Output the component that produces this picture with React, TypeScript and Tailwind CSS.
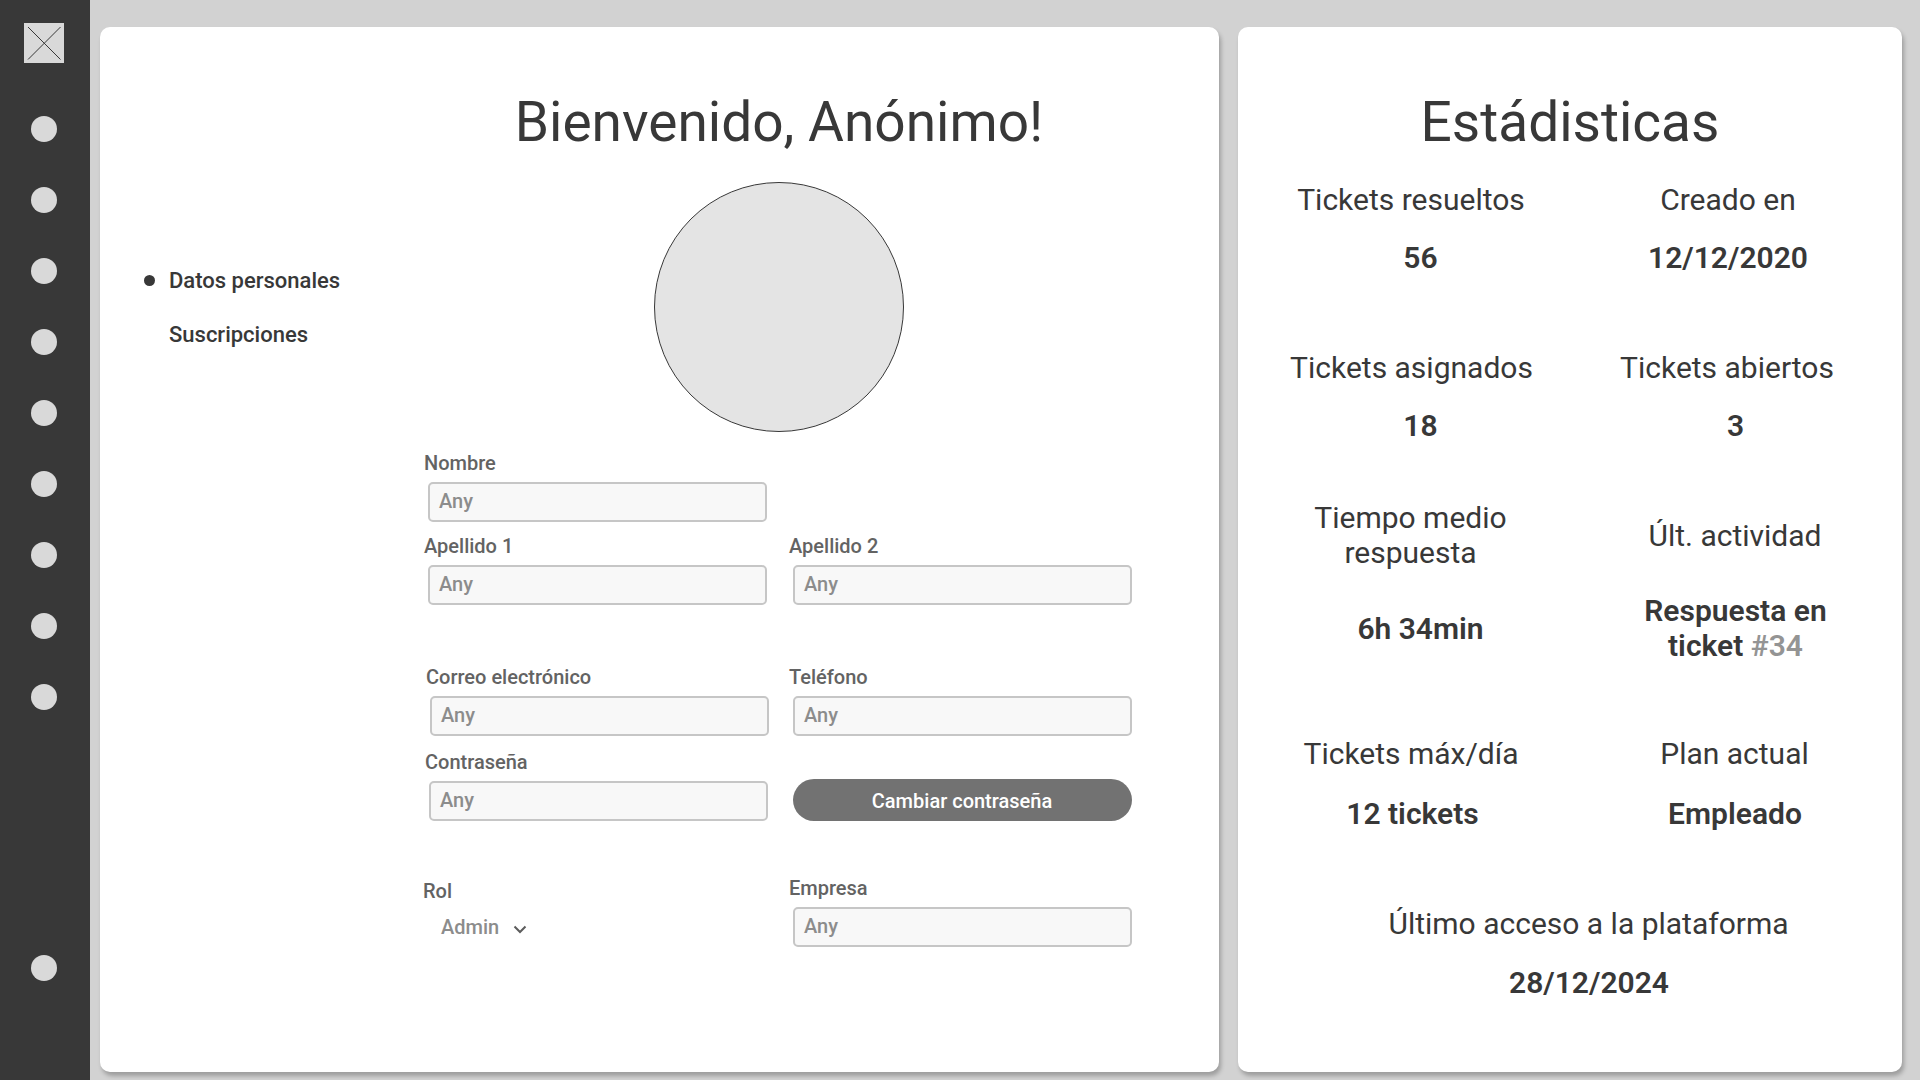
import React from "react";

const menuDots = [0, 1, 2, 3, 4, 5, 6, 7, 8];

function Field({ label, className = "" }: { label: string; className?: string }) {
  return (
    <div className={className}>
      <div className="h-[31px] text-[20px] leading-6 text-[#636363]">{label}</div>
      <div className="ml-1 h-10 w-[339px] rounded-[5px] border-2 border-[#c6c6c6] bg-[#f8f8f8] pt-[5px] pl-[9px] text-[20px] leading-6 text-[#8c8c8c]">
        Any
      </div>
    </div>
  );
}

function Stat({
  label,
  value,
  className = "",
  labelClass = "",
  valueClass = "",
}: {
  label: React.ReactNode;
  value: React.ReactNode;
  className?: string;
  labelClass?: string;
  valueClass?: string;
}) {
  return (
    <div className={`flex flex-col text-center text-[30px] leading-[35px] ${className}`}>
      <div className={labelClass}>{label}</div>
      <div className={`font-semibold ${valueClass}`}>{value}</div>
    </div>
  );
}

export default function App() {
  return (
    <div className="flex h-[1080px] w-[1920px] overflow-hidden bg-[#d2d2d2] font-['Roboto',sans-serif] text-[#383838]">
      <aside className="flex w-[90px] flex-col bg-[#383838] pt-[23px] pb-[99px] pl-6">
        <div className="flex h-10 w-10 items-center justify-center bg-[#d9d9d9]">
          <svg width="40" height="40" viewBox="0 0 40 40" fill="none" stroke="#383838" strokeWidth="1">
            <path d="M4 4L36.5 36.5M36.5 4L4 36.5" />
          </svg>
        </div>
        <div className="mt-[53px] ml-[7px] flex flex-col gap-[45px]">
          {menuDots.map((dot) => (
            <span key={dot} className="h-[26px] w-[26px] rounded-full bg-[#d9d9d9]" />
          ))}
        </div>
        <span className="mt-auto ml-[7px] h-[26px] w-[26px] rounded-full bg-[#d9d9d9]" />
      </aside>

      <main className="mt-[27px] ml-[10px] flex h-[1045px] w-[1119px] rounded-[10px] bg-white shadow-[2px_4px_4px_rgba(0,0,0,0.25)]">
        <nav className="w-[324px] pt-[240px] pl-11 text-[22px] leading-[27px] font-medium">
          <div className="flex items-center">
            <span className="h-[11px] w-[11px] rounded-full bg-[#383838]" />
            <span className="ml-[14px]">Datos personales</span>
          </div>
          <div className="mt-[27px] ml-[25px]">Suscripciones</div>
        </nav>

        <section className="flex w-[710px] flex-col font-medium">
          <h1 className="mt-[62px] text-center text-[55px] leading-[66px] font-normal">Bienvenido, Anónimo!</h1>
          <div className="mx-auto mt-[27px] h-[250px] w-[250px] rounded-full border border-[#383838] bg-[#e4e4e4]" />
          <form className="mt-[19px] grid grid-cols-[365px_345px] grid-rows-[83px_131px_85px_126px_70px]">
            <Field label="Nombre" className="col-span-2" />
            <Field label="Apellido 1" />
            <Field label="Apellido 2" />
            <Field label="Correo electrónico" className="ml-[2px]" />
            <Field label="Teléfono" />
            <Field label="Contraseña" className="ml-px" />
            <button
              type="button"
              className="mt-[29px] ml-1 h-[42px] w-[339px] rounded-full bg-[#727272] pt-[2px] pr-px text-center text-[20px] leading-6 text-white"
            >
              Cambiar contraseña
            </button>
            <div className="-ml-px pt-[3px] text-[20px] leading-6">
              <div className="text-[#636363]">Rol</div>
              <div className="mt-3 ml-[18px] flex items-center text-[#8c8c8c]">
                Admin
                <svg className="mt-[5px] ml-[14px]" width="14" height="9" viewBox="0 0 14 9" fill="none" stroke="#5c5c5c" strokeWidth="2">
                  <path d="M1.5 1.5L7 7L12.5 1.5" />
                </svg>
              </div>
            </div>
            <Field label="Empresa" />
          </form>
        </section>
      </main>

      <section className="mt-[27px] ml-[19px] h-[1045px] w-[664px] rounded-[10px] bg-white shadow-[2px_4px_4px_rgba(0,0,0,0.25)]">
        <h2 className="pt-[62px] text-center text-[55px] leading-[66px]">Estádisticas</h2>
        <div className="mt-[27px] ml-[11px] grid w-[648px] grid-cols-2 grid-rows-[168px_150px_236px_170px_100px]">
          <Stat label="Tickets resueltos" value="56" valueClass="mt-[23px] pl-[19px]" />
          <Stat label="Creado en" value="12/12/2020" className="pr-[14px]" valueClass="mt-[23px]" />
          <Stat label="Tickets asignados" value="18" labelClass="pl-px" valueClass="mt-[23px] pl-[19px]" />
          <Stat label="Tickets abiertos" value="3" labelClass="pr-4" valueClass="mt-[23px] pl-px" />
          <Stat label={<>Tiempo medio<br />respuesta</>} value="6h 34min" labelClass="pr-px" valueClass="mt-[41px] pl-[19px]" />
          <Stat
            label="Últ. actividad"
            labelClass="mt-[18px]"
            value={<>Respuesta en<br />ticket <span className="text-[#949494]">#34</span></>}
            valueClass="mt-10 pl-px"
          />
          <Stat label="Tickets máx/día" value="12 tickets" valueClass="mt-[25px] pl-[3px]" />
          <Stat label="Plan actual" value="Empleado" labelClass="pr-px" valueClass="mt-[25px]" />
          <Stat label="Último acceso a la plataforma" value="28/12/2024" className="col-span-2 pl-[31px]" valueClass="mt-6 pl-px" />
        </div>
      </section>
    </div>
  );
}
